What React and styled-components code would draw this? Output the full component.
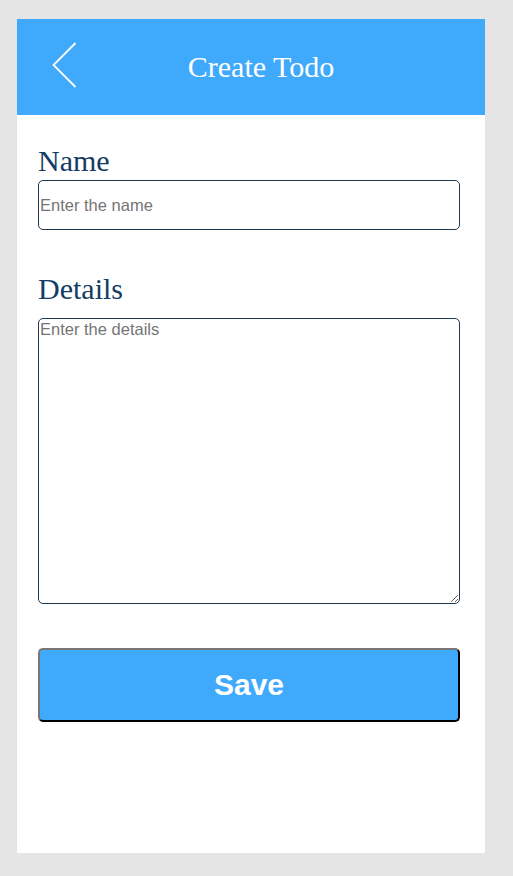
import React from "react";
import styled, { createGlobalStyle } from "styled-components";

const Global = createGlobalStyle`
  html, body { margin: 0; padding: 0; background: #e5e5e5; }
  body { font-family: "Liberation Serif", serif; }
  * { box-sizing: border-box; }
`;

const Page = styled.div`
  padding: 19px 28px 23px 17px;
  width: 513px;
  min-height: 876px;
`;

const Card = styled.div`
  width: 468px;
  height: 834px;
  background: #ffffff;
  display: flex;
  flex-direction: column;
`;

const Header = styled.header`
  height: 96px;
  background: #3fa9fc;
  display: flex;
  align-items: center;
  position: relative;
  justify-content: center;
`;

const BackButton = styled.button`
  position: absolute;
  left: 33px;
  top: 22px;
  width: 30px;
  height: 48px;
  padding: 0;
  border: 0;
  background: transparent;
  display: flex;
`;

const Title = styled.h1`
  margin: 0;
  font-family: "Liberation Serif", serif;
  font-weight: normal;
  font-size: 30px;
  color: #ffffff;
  padding-left: 20px;
`;

const Form = styled.form`
  display: flex;
  flex-direction: column;
  padding: 31px 25px 0 21px;
`;

const Label = styled.label`
  font-family: "Liberation Serif", serif;
  font-size: 30px;
  line-height: 30px;
  color: #143c64;
  margin-bottom: 4px;
  margin-top: ${(p) => p.$top || 0}px;
`;

const Input = styled.input`
  width: 422px;
  height: 50px;
  border: 1px solid #1d3a52;
  border-radius: 5px;
  padding: 0 1px;
  font-family: "Liberation Sans", Arial, sans-serif;
  font-size: 16.5px;
  color: #333;
  outline: none;
  &::placeholder { color: #757575; }
`;

const TextArea = styled.textarea`
  width: 422px;
  height: 286px;
  border: 1px solid #1d3a52;
  border-radius: 5px;
  padding: 1px 1px;
  font-family: "Liberation Sans", Arial, sans-serif;
  font-size: 16.5px;
  color: #333;
  outline: none;
  resize: both;
  margin-top: 10px;
  &::placeholder { color: #757575; }
`;

const SaveButton = styled.button`
  margin-top: 44px;
  width: 422px;
  height: 74px;
  background: #3fa9fc;
  border: 2px outset #767676;
  border-right-color: #1a1a1a;
  border-bottom-color: #1a1a1a;
  border-radius: 5px;
  color: #ffffff;
  font-family: "Liberation Sans", Arial, sans-serif;
  font-weight: bold;
  font-size: 30px;
  cursor: pointer;
`;

export default function App() {
  return (
    <Page>
      <Global />
      <Card>
        <Header>
          <BackButton aria-label="Back">
            <svg width="30" height="48" viewBox="0 0 30 48">
              <polyline
                points="25.5,2 3.5,24 25.5,46"
                fill="none"
                stroke="#ffffff"
                strokeWidth="1.8"
              />
            </svg>
          </BackButton>
          <Title>Create Todo</Title>
        </Header>
        <Form onSubmit={(e) => e.preventDefault()}>
          <Label htmlFor="name">Name</Label>
          <Input id="name" placeholder="Enter the name" />
          <Label htmlFor="details" $top={44}>Details</Label>
          <TextArea id="details" placeholder="Enter the details" />
          <SaveButton type="submit">Save</SaveButton>
        </Form>
      </Card>
    </Page>
  );
}
